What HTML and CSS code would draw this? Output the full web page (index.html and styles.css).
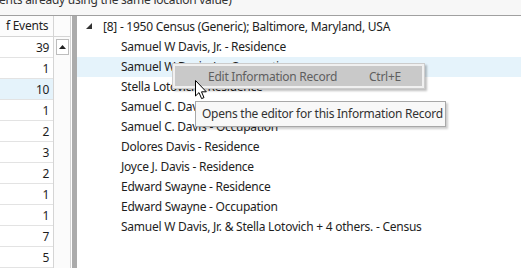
FILE: index.html
```html
<!DOCTYPE html>
<html lang="en">
<head>
  <meta charset="UTF-8" />
  <title>Information Records</title>
  <link rel="stylesheet" href="styles.css">
</head>
<body>

  <div class="hint"><span class="hint-text">ents already using the same location value)</span></div>

  <div class="main">
    <div class="left">
      <div class="grid">
        <div class="grid-head">f Events</div>
        <div class="cell">39</div>
        <div class="cell">1</div>
        <div class="cell selected">10</div>
        <div class="cell">1</div>
        <div class="cell">2</div>
        <div class="cell">3</div>
        <div class="cell">2</div>
        <div class="cell">1</div>
        <div class="cell">1</div>
        <div class="cell">7</div>
        <div class="cell">5</div>
      </div>
      <div class="vscroll">
        <div class="vscroll-head"></div>
        <div class="vscroll-track">
          <div class="vscroll-up">
            <svg width="7" height="4" viewBox="0 0 7 4"><path d="M0 4 L3.5 0 L7 4 Z" fill="#222"/></svg>
          </div>
        </div>
      </div>
    </div>

    <div class="splitter"></div>

    <div class="right">
      <div class="tree-row root">
        <svg class="expander" width="6" height="6" viewBox="0 0 6 6"><path d="M6 0 L6 6 L0 6 Z" fill="#333"/></svg>
        <span>[8] - 1950 Census (Generic); Baltimore, Maryland, USA</span>
      </div>
      <div class="tree-row child">Samuel W Davis, Jr. - Residence</div>
      <div class="tree-row child selected">Samuel W Davis, Jr. - Occupation</div>
      <div class="tree-row child">Stella Lotovich - Residence</div>
      <div class="tree-row child">Samuel C. Davis - Residence</div>
      <div class="tree-row child">Samuel C. Davis - Occupation</div>
      <div class="tree-row child">Dolores Davis - Residence</div>
      <div class="tree-row child">Joyce J. Davis - Residence</div>
      <div class="tree-row child">Edward Swayne - Residence</div>
      <div class="tree-row child">Edward Swayne - Occupation</div>
      <div class="tree-row child">Samuel W Davis, Jr. &amp; Stella Lotovich + 4 others. - Census</div>

      <div class="menu">
        <div class="menu-item">
          <span class="menu-label">Edit Information Record</span>
          <span class="menu-key">Ctrl+E</span>
        </div>
      </div>

      <div class="tooltip">Opens the editor for this Information Record</div>

      <svg class="cursor" width="13" height="20" viewBox="0 0 13 20">
        <path d="M0.5 0.5 L0.5 16 L4 12.6 L6.6 18.6 L9 17.6 L6.5 11.8 L11.3 11.8 Z" fill="#fff" stroke="#000" stroke-width="1" stroke-linejoin="miter"/>
      </svg>
    </div>
  </div>

</body>
</html>
```

FILE: styles.css
```css
body {
  margin: 0;
  width: 521px;
  height: 268px;
  overflow: hidden;
  font-family: "Noto Sans", "Open Sans", sans-serif;
  font-size: 12px;
  letter-spacing: -0.25px;
  color: #1e1e1e;
  background: #fff;
}
.hint {
  height: 16px;
  background: #f7f7f7;
  border-bottom: 1px solid #a0a0a0;
  color: #333;
  overflow: hidden;
  white-space: nowrap;
  box-sizing: border-box;
}
.hint-text {
  display: block;
  line-height: 12px;
  margin-top: -6px;
  margin-left: -1px;
}
.main {
  display: flex;
  height: 252px;
}
.left {
  display: flex;
  width: 71px;
}
.grid {
  width: 55px;
  border-right: 1px solid #d5d5d5;
  box-sizing: border-box;
}
.grid-head {
  height: 20px;
  line-height: 20px;
  border-bottom: 1px solid #d5d5d5;
  background: #fcfcfc;
  text-align: right;
  padding-right: 5px;
  white-space: nowrap;
  overflow: hidden;
  direction: rtl;
}
.cell {
  height: 21px;
  line-height: 21px;
  border-bottom: 1px solid #e3e3e3;
  box-sizing: border-box;
  text-align: right;
  padding-right: 4px;
}
.cell.selected {
  background: #e5f3fb;
}
.vscroll {
  width: 16px;
  border-right: 1px solid #d5d5d5;
}
.vscroll-head {
  height: 20px;
  border-bottom: 1px solid #d5d5d5;
  background: #fcfcfc;
}
.vscroll-track {
  height: 231px;
  background: #fbfbfb;
  padding: 2px 1px 0 2px;
}
.vscroll-up {
  height: 14px;
  border: 1px solid #bdbdbd;
  background: #fff;
  display: flex;
  align-items: center;
  justify-content: center;
}
.splitter {
  width: 5px;
  margin-left: 1px;
  background: #ababab;
}
.right {
  position: relative;
  flex: 1;
  padding-top: 1px;
}
.tree-row {
  height: 20px;
  line-height: 20px;
  white-space: nowrap;
  display: flex;
  align-items: center;
}
.root {
  padding-left: 9px;
}
.expander {
  margin-right: 11px;
  margin-top: -2px;
}
.child {
  padding-left: 44px;
}
.tree-row.selected {
  background: #e5f3fb;
}
.menu {
  position: absolute;
  left: 95px;
  top: 47px;
  width: 253px;
  height: 26px;
  box-sizing: border-box;
  padding: 2px;
  background: #f0f0f0;
  border: 1px solid #ccc;
  box-shadow: 2px 2px 2px rgba(0, 0, 0, 0.25);
}
.menu-item {
  height: 20px;
  display: flex;
  align-items: center;
  background: #c9c9c9;
  color: #5f5f5f;
}
.menu-label {
  margin-left: 33px;
  flex: 1;
}
.menu-key {
  margin-right: 21px;
}
.tooltip {
  position: absolute;
  left: 118px;
  top: 85px;
  width: 251px;
  height: 26px;
  box-sizing: border-box;
  padding-left: 6px;
  line-height: 24px;
  background: #f8f8f8;
  border: 1px solid #a8a8a8;
  box-shadow: 2px 2px 2px rgba(0, 0, 0, 0.2);
  white-space: nowrap;
  color: #333;
}
.cursor {
  position: absolute;
  left: 118px;
  top: 64px;
}
```
